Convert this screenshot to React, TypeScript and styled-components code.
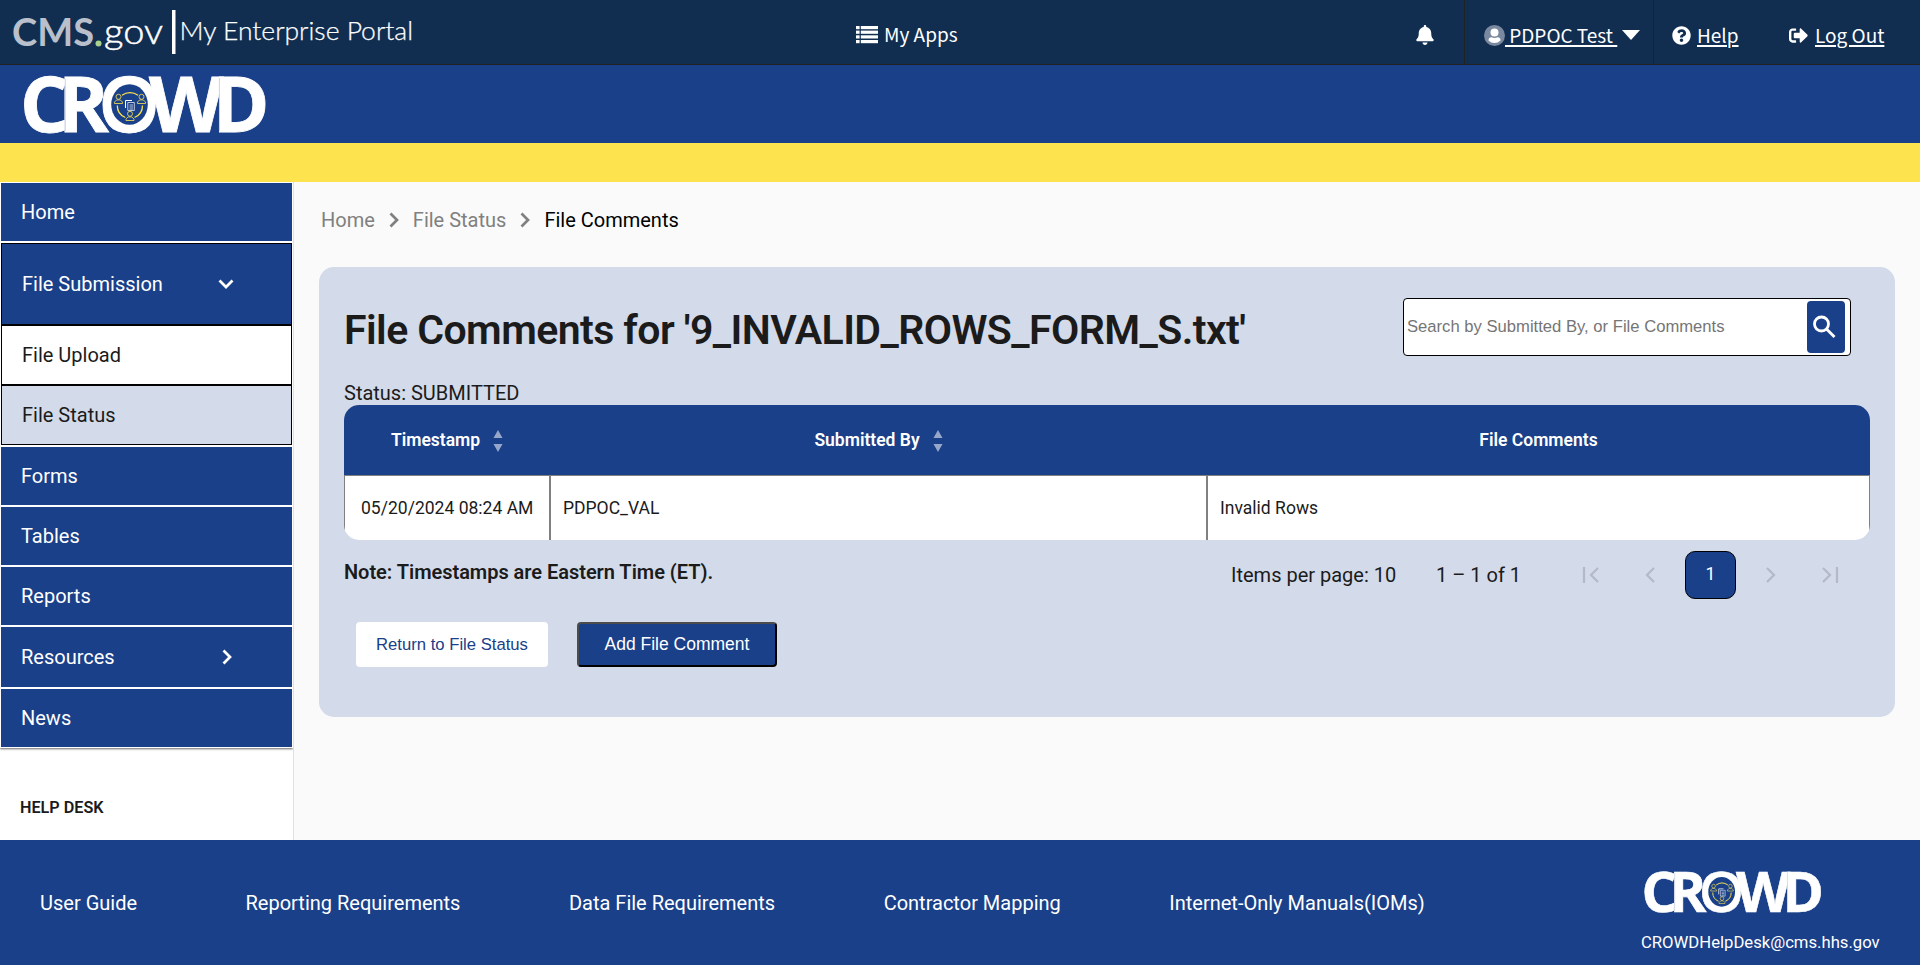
import React from 'react';
import styled, { createGlobalStyle } from 'styled-components';
import { FaBell, FaQuestionCircle, FaSignOutAlt } from 'react-icons/fa';

const GlobalStyle = createGlobalStyle`
  * { box-sizing: border-box; }
  body { margin: 0; background: #fff; overflow: hidden; }
`;

const navy = '#112e51';
const blue = '#1a4089';
const pale = '#d3daea';
const ink = '#1b1b1b';

const Page = styled.div`
  width: 1920px;
  height: 967px;
  display: flex;
  flex-direction: column;
  font-family: Roboto, 'Liberation Sans', sans-serif;
  font-size: 20px;
  color: ${ink};
  white-space: nowrap;
`;

const TopBar = styled.header`
  height: 65px;
  display: flex;
  background: ${navy};
  border-bottom: 1px solid #212121;
  color: #fff;
  font: 19px 'Noto Sans CJK SC', sans-serif;
`;
const TopLogo = styled.div`
  width: 856px;
`;
const TopLink = styled.div<{ $width: number; $pad?: number; $divided?: boolean }>`
  width: ${p => p.$width}px;
  height: 64px;
  padding: 6px 0 0 ${p => p.$pad ?? 0}px;
  display: flex;
  align-items: center;
  border-left: ${p => (p.$divided ? '1px solid #212121' : '0')};
  svg { flex: none; }
`;
const LinkText = styled.span<{ $gap: number; $underline?: boolean; $lift?: number }>`
  margin-left: ${p => p.$gap}px;
  padding-bottom: ${p => p.$lift ?? 2}px;
  white-space: pre;
  text-decoration: ${p => (p.$underline ? 'underline' : 'none')};
  text-decoration-thickness: 2px;
  text-underline-offset: 2px;
`;
const Caret = styled.svg`
  width: 18px;
  height: 10px;
  margin-left: 5px;
  fill: #fff;
`;

const Banner = styled.div`
  height: 78px;
  padding: 7px 0 0 22px;
  background: ${blue};
`;
const Stripe = styled.div`
  height: 39px;
  background: #fde34d;
`;

const Body = styled.div`
  height: 658px;
  display: flex;
`;
const Sidebar = styled.nav`
  width: 294px;
  background: #fff;
  border-right: 1px solid #e0e0e0;
`;
const Menu = styled.div`
  box-shadow: 0 1px 2px rgba(0, 0, 0, 0.6);
  clip-path: inset(0 0 -6px 0);
`;
const MenuItem = styled.div<{ $height?: number }>`
  height: ${p => p.$height ?? 60}px;
  padding-left: 20px;
  display: flex;
  align-items: center;
  border: 1px solid #fff;
  background: ${blue};
  color: #fff;
`;
const MenuGroup = styled.div`
  border: 1px solid #fff;
`;
const GroupItem = styled.div<{ $height: number; $bg: string; $fg: string }>`
  height: ${p => p.$height}px;
  padding-left: 20px;
  display: flex;
  align-items: center;
  border: 1px solid #000;
  background: ${p => p.$bg};
  color: ${p => p.$fg};
`;
const ItemLabel = styled.span<{ $width?: number }>`
  width: ${p => (p.$width ? `${p.$width}px` : 'auto')};
`;
const HelpDesk = styled.div`
  padding: 48px 0 0 20px;
  font-size: 16.2px;
  line-height: 24px;
  font-weight: 600;
`;

const Main = styled.main`
  flex: 1;
  padding: 0 25px;
  background: #fafafa;
`;
const Breadcrumb = styled.div`
  height: 85px;
  padding: 0 0 9px 2px;
  display: flex;
  align-items: center;
  color: #808080;
  svg { margin: 0 11px; }
`;
const Current = styled.span`
  color: #000;
`;

const Card = styled.section`
  height: 450px;
  padding: 31px 25px 0;
  border-radius: 15px;
  background: ${pale};
`;
const TitleRow = styled.div`
  height: 82px;
  display: flex;
  justify-content: space-between;
  align-items: flex-start;
`;
const Title = styled.h1`
  margin: 8px 0 0;
  font-size: 41px;
  line-height: 48px;
  font-weight: 600;
  letter-spacing: -0.57px;
`;
const Search = styled.div`
  width: 448px;
  height: 58px;
  margin-right: 19px;
  padding: 2px 5px 2px 3px;
  display: flex;
  justify-content: space-between;
  align-items: center;
  border: 1px solid #000;
  border-radius: 4px;
  background: #fff;
  color: #757575;
  font: 16.64px 'Liberation Sans', sans-serif;
`;
const Placeholder = styled.span`
  padding-bottom: 1px;
`;
const SearchButton = styled.div`
  width: 38px;
  height: 52px;
  display: flex;
  align-items: center;
  justify-content: center;
  padding-right: 4px;
  border-radius: 4px;
  background: ${blue};
`;
const Status = styled.div`
  height: 25px;
  line-height: 26px;
`;

const Table = styled.div`
  width: 1526px;
  height: 135px;
  border-radius: 15px;
  overflow: hidden;
  background: #fff;
`;
const Row = styled.div`
  display: grid;
  grid-template-columns: 206px 657px 663px;
`;
const HeadCell = styled.div`
  height: 70px;
  padding-bottom: 1px;
  display: flex;
  align-items: center;
  justify-content: center;
  gap: 13px;
  background: ${blue};
  color: #fff;
  font-size: 17.5px;
  font-weight: 600;
  svg { margin-top: 2px; }
`;
const Cell = styled.div<{ $pad?: number }>`
  height: 65px;
  padding: 0 0 1px ${p => p.$pad ?? 12}px;
  display: flex;
  align-items: center;
  border: 1px solid #808080;
  border-bottom: 0;
  font-size: 17.55px;
`;

const BelowTable = styled.div`
  height: 82px;
  display: flex;
  justify-content: space-between;
`;
const Note = styled.div`
  padding-top: 20px;
  line-height: 25px;
  font-weight: 600;
  letter-spacing: -0.03px;
`;
const Pager = styled.div`
  height: 48px;
  margin-top: 11px;
  width: 639px;
  display: flex;
  align-items: center;
`;
const PagerText = styled.span<{ $width: number }>`
  width: ${p => p.$width}px;
`;
const PagerIcon = styled.svg<{ $right: number }>`
  width: 18px;
  height: 18px;
  flex: none;
  margin-right: ${p => p.$right}px;
  fill: none;
  stroke: #b3b9c9;
  stroke-width: 2.2;
`;
const PageNumber = styled.div`
  width: 51px;
  height: 48px;
  margin-right: 26px;
  padding-bottom: 2px;
  display: flex;
  align-items: center;
  justify-content: center;
  border: 1px solid #000;
  border-radius: 10px;
  background: ${blue};
  color: #fff;
  font-size: 17.6px;
`;

const Actions = styled.div`
  display: flex;
  gap: 29px;
  padding-left: 12px;
`;
const Button = styled.div<{ $primary?: boolean }>`
  width: ${p => (p.$primary ? 200 : 192)}px;
  height: 45px;
  display: flex;
  align-items: center;
  justify-content: center;
  border-style: solid;
  border-width: ${p => (p.$primary ? 2 : 0)}px;
  border-color: #4c4c4c #000 #000 #4c4c4c;
  border-radius: 4px;
  background: ${p => (p.$primary ? blue : '#fff')};
  color: ${p => (p.$primary ? '#fff' : blue)};
  font: ${p => (p.$primary ? 17.5 : 16.67)}px 'Liberation Sans', sans-serif;
`;

const Footer = styled.footer`
  height: 125px;
  display: flex;
  justify-content: space-between;
  padding: 0 40px;
  background: ${blue};
  color: #fff;
`;
const FooterLinks = styled.div`
  display: flex;
  gap: 108.5px;
  padding-top: 51px;
  line-height: 25px;
`;
const Contact = styled.div`
  width: 239px;
  padding-top: 28px;
  font-size: 16.67px;
  svg { display: block; margin: 0 0 18px 2px; }
`;

const PortalLogo = () => (
  <svg width="430" height="64" viewBox="0 0 430 64">
    <g fontFamily="Lato, sans-serif">
      <text x="12" y="46" fontSize="38" fontWeight="700" fill="#b9c0cb" textLength="82" lengthAdjust="spacingAndGlyphs">CMS</text>
      <circle cx="98.500" cy="43.500" r="3" fill="#a9d18e" />
      <text x="104" y="44" fontSize="36" fontWeight="300" fill="#fff" stroke="#fff" strokeWidth=".5" textLength="59" lengthAdjust="spacingAndGlyphs">gov</text>
      <rect x="172" y="10" width="3.500" height="44" fill="#fff" />
      <text x="179.500" y="40" fontSize="25.500" fontWeight="300" fill="#fff" stroke="#fff" strokeWidth=".25" textLength="233.500" lengthAdjust="spacingAndGlyphs">My Enterprise Portal</text>
    </g>
  </svg>
);

const Person = ({ x, y }: { x: number; y: number }) => (
  <g transform={`translate(${x} ${y})`}>
    <circle cx="0" cy="-2.500" r="2.500" />
    <path d="M-4 4.200v-1.400l2.200-2.200h3.600l2.200 2.200v1.400z" />
  </g>
);

const CrowdLogo = ({ width }: { width: number }) => (
  <svg width={width} height={(width * 64) / 246} viewBox="22 72 246 64" overflow="visible">
    <text x="20 58 98.500 149 212.500" y="131.500" fontFamily="'Open Sans', 'Noto Sans', sans-serif" fontWeight="700" fontSize="77" fill="#fff" stroke="#fff" strokeWidth=".8">CROWD</text>
    <path d="M65.300 79v52M219.400 78v53" stroke="#a9b6d4" strokeWidth=".6" />
    <ellipse cx="129.500" cy="104.500" rx="18.300" ry="20.300" fill={blue} />
    <g fill="none" stroke="#fde34d" strokeWidth="1.300">
      <path d="M122 95.200a14 14 0 0 1 16 0M117.300 105.500a13 13 0 0 0 8 12M142.500 105.500a13 13 0 0 1-8 12" />
      <g strokeWidth=".8">
        <Person x={118.5} y={99.3} />
        <Person x={141.5} y={99.3} />
        <Person x={130} y={116.3} />
      </g>
    </g>
    <path d="M125.500 108v-7.500h6.500" fill="none" stroke="#fff" />
    <path d="M127.800 102.500h6.500v8h-6.500zM129.500 105h3.500M129.500 107h3.500M129.500 109h3.500" fill="none" stroke="#fff" strokeWidth=".7" />
  </svg>
);

const ListIcon = () => (
  <svg width="22" height="18" viewBox="0 0 22 18" fill="#fff">
    {[0, 4.6, 9.3, 14].map(y => (
      <React.Fragment key={y}>
        <rect x="0" y={y} width="3.600" height="3.200" />
        <rect x="4.800" y={y} width="17.200" height="3.200" />
      </React.Fragment>
    ))}
  </svg>
);

const UserIcon = () => (
  <svg width="21" height="21" viewBox="0 0 21 21">
    <circle cx="10.500" cy="10.500" r="10.500" fill="#7a899f" />
    <circle cx="10.500" cy="7.600" r="4" fill="#fff" />
    <path d="M4.500 15.500q0-3.200 3-3.200 3 1.300 6 0 3 0 3 3.200-2.500 2.600-6 2.600t-6-2.600z" fill="#fff" />
  </svg>
);

const Chevron = ({ color, down }: { color: string; down?: boolean }) => (
  <svg width="16" height="16" viewBox="0 0 16 16" fill="none" stroke={color} strokeWidth="2.700">
    <path d={down ? 'M1.500 4.500l6.500 6.500 6.500-6.500' : 'M4.500 1.500l6.500 6.500-6.500 6.500'} />
  </svg>
);

const SortIcon = () => (
  <svg width="10" height="22" viewBox="0 0 10 22" fill="#97a7ca">
    <path d="M.5 8h9l-4.500-8zM.5 14h9l-4.500 8z" />
  </svg>
);

const footerLinks = ['User Guide', 'Reporting Requirements', 'Data File Requirements', 'Contractor Mapping', 'Internet-Only Manuals(IOMs)'];

export default function App() {
  return (
    <Page>
      <GlobalStyle />
      <TopBar>
        <TopLogo><PortalLogo /></TopLogo>
        <TopLink $width={559}>
          <ListIcon />
          <LinkText $gap={6} $lift={4}>My Apps</LinkText>
        </TopLink>
        <TopLink $width={49}><FaBell size={20} /></TopLink>
        <TopLink $width={189} $pad={19} $divided>
          <UserIcon />
          <LinkText $gap={0} $underline> PDPOC Test </LinkText>
          <Caret viewBox="0 0 18 10"><path d="M0 0h18l-9 10z" /></Caret>
        </TopLink>
        <TopLink $width={136} $pad={18} $divided>
          <FaQuestionCircle size={19} />
          <LinkText $gap={6} $underline>Help</LinkText>
        </TopLink>
        <TopLink $width={131}>
          <FaSignOutAlt size={19} />
          <LinkText $gap={7} $underline>Log Out</LinkText>
        </TopLink>
      </TopBar>
      <Banner><CrowdLogo width={246} /></Banner>
      <Stripe />
      <Body>
        <Sidebar>
          <Menu>
            <MenuItem>Home</MenuItem>
            <MenuGroup>
              <GroupItem $height={82} $bg={blue} $fg="#fff">
                <ItemLabel $width={196}>File Submission</ItemLabel>
                <Chevron color="#fff" down />
              </GroupItem>
              <GroupItem $height={60} $bg="#fff" $fg={ink}>File Upload</GroupItem>
              <GroupItem $height={60} $bg={pale} $fg={ink}>File Status</GroupItem>
            </MenuGroup>
            <MenuItem>Forms</MenuItem>
            <MenuItem>Tables</MenuItem>
            <MenuItem>Reports</MenuItem>
            <MenuItem $height={62}>
              <ItemLabel $width={198}>Resources</ItemLabel>
              <Chevron color="#fff" />
            </MenuItem>
            <MenuItem>News</MenuItem>
          </Menu>
          <HelpDesk>HELP DESK</HelpDesk>
        </Sidebar>
        <Main>
          <Breadcrumb>
            <span>Home</span>
            <Chevron color="#808080" />
            <span>File Status</span>
            <Chevron color="#808080" />
            <Current>File Comments</Current>
          </Breadcrumb>
          <Card>
            <TitleRow>
              <Title>File Comments for '9_INVALID_ROWS_FORM_S.txt'</Title>
              <Search>
                <Placeholder>Search by Submitted By, or File Comments</Placeholder>
                <SearchButton>
                  <svg width="24" height="24" viewBox="0 0 24 24" fill="none" stroke="#fff" strokeWidth="2.800">
                    <circle cx="9.500" cy="9" r="7" />
                    <path d="M14.500 14l8 8" />
                  </svg>
                </SearchButton>
              </Search>
            </TitleRow>
            <Status>Status: SUBMITTED</Status>
            <Table>
              <Row>
                <HeadCell>Timestamp <SortIcon /></HeadCell>
                <HeadCell>Submitted By <SortIcon /></HeadCell>
                <HeadCell>File Comments</HeadCell>
              </Row>
              <Row>
                <Cell $pad={16}>05/20/2024 08:24 AM</Cell>
                <Cell>PDPOC_VAL</Cell>
                <Cell>Invalid Rows</Cell>
              </Row>
            </Table>
            <BelowTable>
              <Note>Note: Timestamps are Eastern Time (ET).</Note>
              <Pager>
                <PagerText $width={205}>Items per page: 10</PagerText>
                <PagerText $width={146}>1 – 1 of 1</PagerText>
                <PagerIcon $right={41} viewBox="0 0 18 18"><path d="M2 1v16M16 2l-7 7 7 7" /></PagerIcon>
                <PagerIcon $right={26} viewBox="0 0 18 18"><path d="M13 2L6 9l7 7" /></PagerIcon>
                <PageNumber>1</PageNumber>
                <PagerIcon $right={41} viewBox="0 0 18 18"><path d="M5 2l7 7-7 7" /></PagerIcon>
                <PagerIcon $right={0} viewBox="0 0 18 18"><path d="M2 2l7 7-7 7M16 1v16" /></PagerIcon>
              </Pager>
            </BelowTable>
            <Actions>
              <Button>Return to File Status</Button>
              <Button $primary>Add File Comment</Button>
            </Actions>
          </Card>
        </Main>
      </Body>
      <Footer>
        <FooterLinks>
          {footerLinks.map(label => <span key={label}>{label}</span>)}
        </FooterLinks>
        <Contact>
          <CrowdLogo width={180} />
          CROWDHelpDesk@cms.hhs.gov
        </Contact>
      </Footer>
    </Page>
  );
}
